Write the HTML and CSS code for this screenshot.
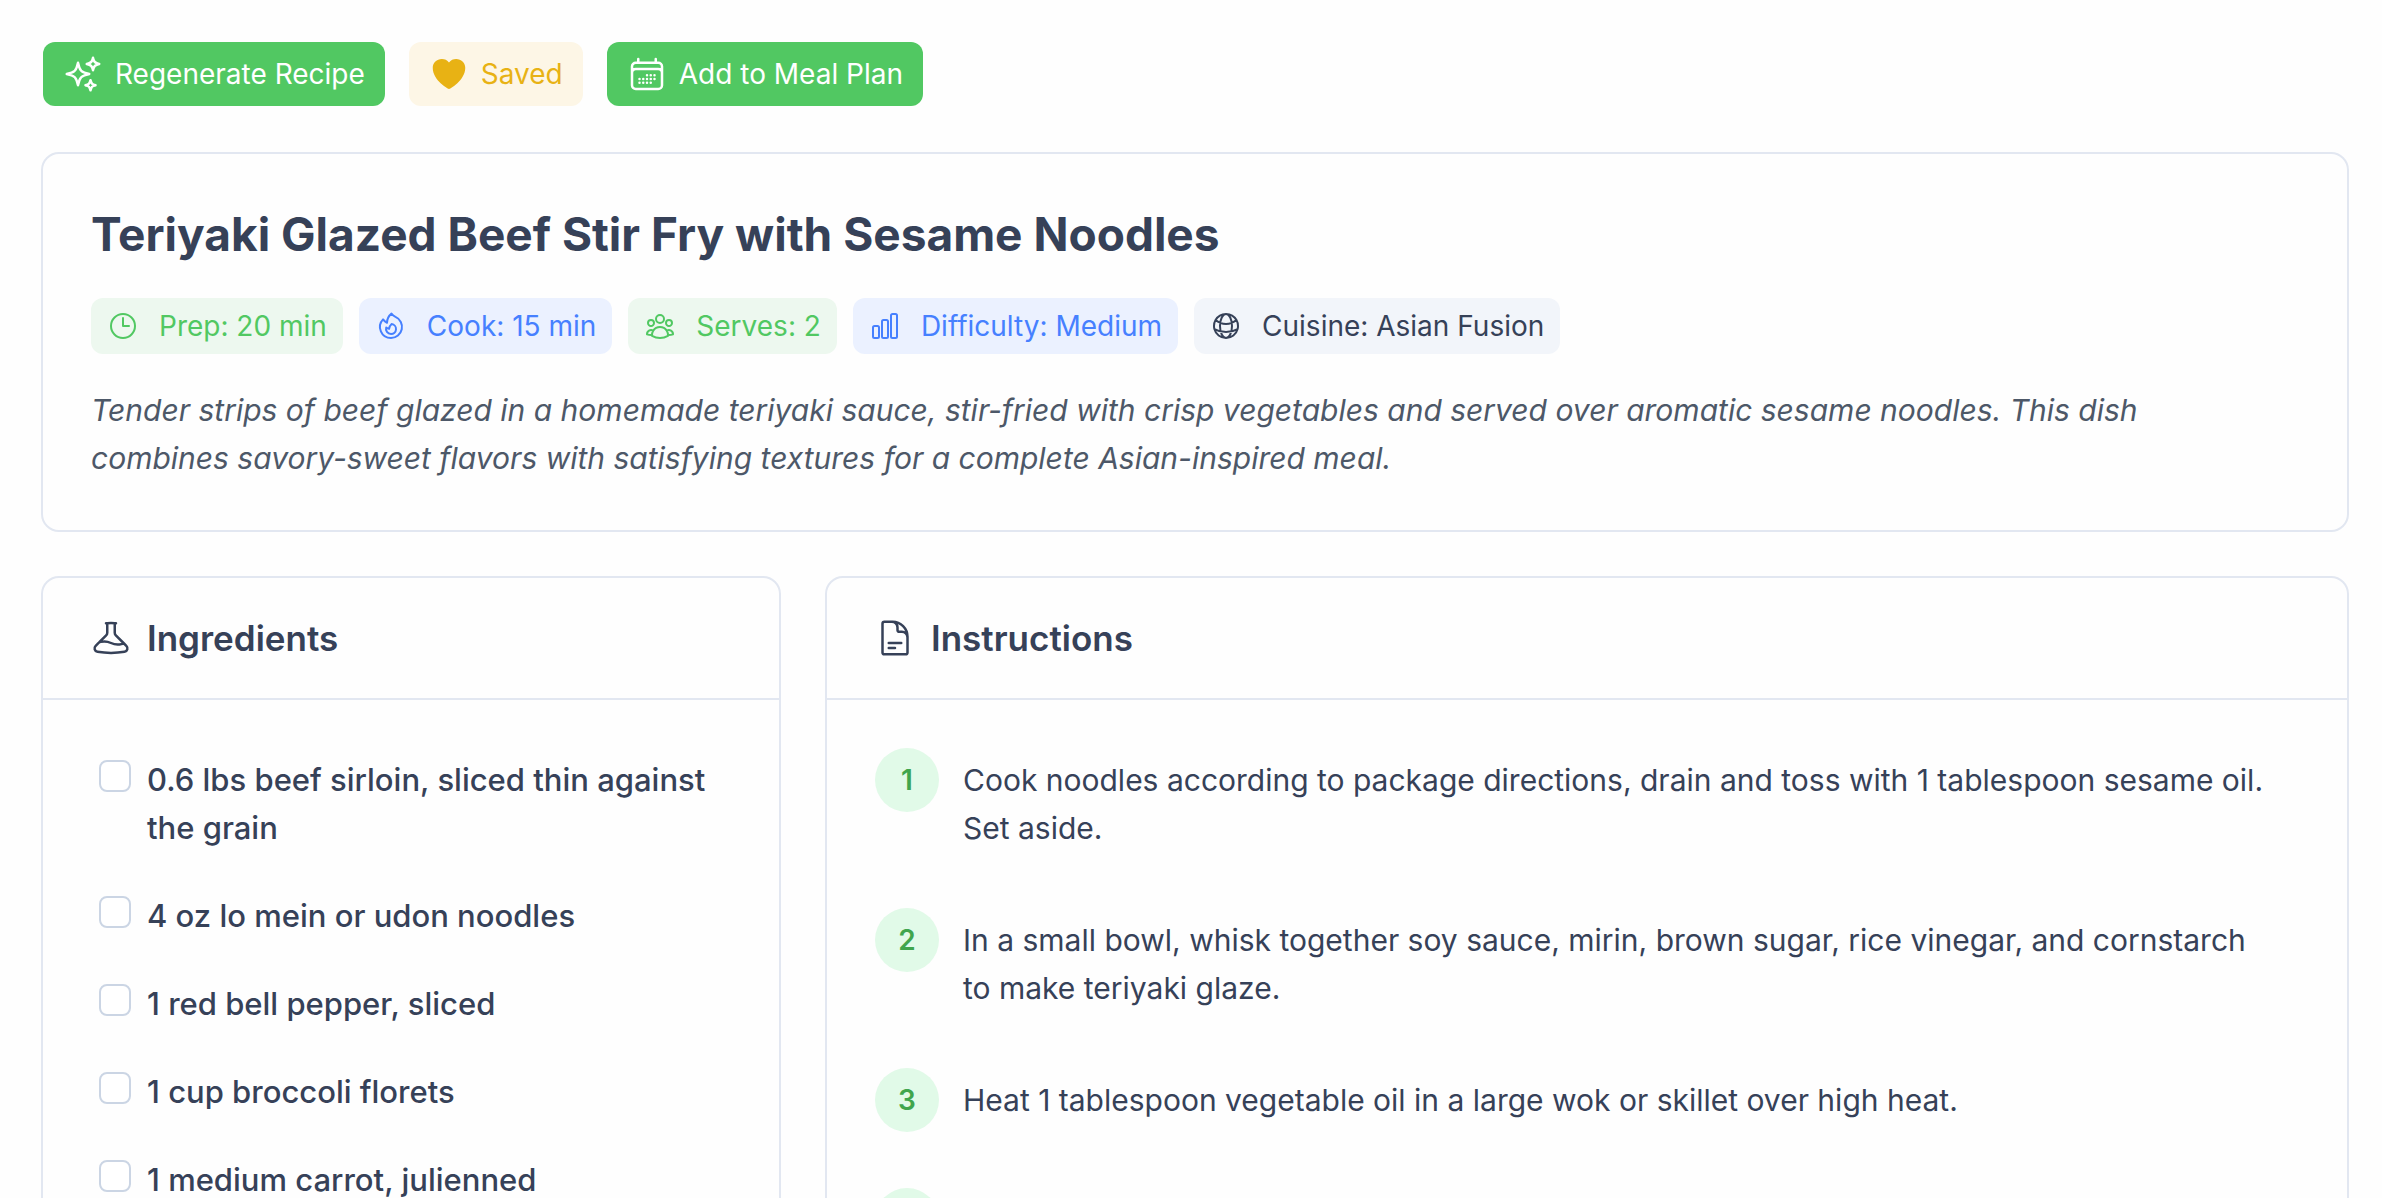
FILE: index.html
```html
<!DOCTYPE html>
<html lang="en">
<head>
<meta charset="utf-8">
<meta name="viewport" content="width=device-width, initial-scale=1">
<title>Teriyaki Glazed Beef Stir Fry with Sesame Noodles</title>
<link rel="stylesheet" href="styles.css">
</head>
<body>
<main class="page">
  <div class="actions">
    <button class="btn btn-primary" type="button">
      <svg class="icon" viewBox="0 0 24 24" aria-hidden="true"><path d="M9.813 15.904 9 18.75l-.813-2.846a4.5 4.5 0 0 0-3.09-3.09L2.25 12l2.846-.813a4.5 4.5 0 0 0 3.09-3.09L9 5.25l.813 2.846a4.5 4.5 0 0 0 3.09 3.09L15.75 12l-2.846.813a4.5 4.5 0 0 0-3.09 3.09ZM18.259 8.715 18 9.75l-.259-1.035a3.375 3.375 0 0 0-2.455-2.456L14.25 6l1.036-.259a3.375 3.375 0 0 0 2.455-2.456L18 2.25l.259 1.035a3.375 3.375 0 0 0 2.456 2.456L21.75 6l-1.035.259a3.375 3.375 0 0 0-2.456 2.456ZM16.894 20.567 16.5 21.75l-.394-1.183a2.25 2.25 0 0 0-1.423-1.423L13.5 18.75l1.183-.394a2.25 2.25 0 0 0 1.423-1.423l.394-1.183.394 1.183a2.25 2.25 0 0 0 1.423 1.423l1.183.394-1.183.394a2.25 2.25 0 0 0-1.423 1.423Z"/></svg>
      Regenerate Recipe
    </button>
    <button class="btn btn-saved" type="button" aria-pressed="true">
      <svg class="icon icon-solid" viewBox="0 0 24 24" aria-hidden="true"><path d="m11.645 20.91-.007-.003-.022-.012a15.247 15.247 0 0 1-.383-.218 25.18 25.18 0 0 1-4.244-3.17C4.688 15.36 2.25 12.174 2.25 8.25 2.25 5.322 4.714 3 7.688 3A5.5 5.5 0 0 1 12 5.052 5.5 5.5 0 0 1 16.313 3c2.973 0 5.437 2.322 5.437 5.25 0 3.925-2.438 7.111-4.739 9.256a25.175 25.175 0 0 1-4.244 3.17 15.247 15.247 0 0 1-.383.219l-.022.012-.007.004-.003.001a.752.752 0 0 1-.704 0l-.003-.001Z"/></svg>
      Saved
    </button>
    <button class="btn btn-primary" type="button">
      <svg class="icon" viewBox="0 0 24 24" aria-hidden="true"><path d="M6.75 3v2.25M17.25 3v2.25M3 18.75V7.5a2.25 2.25 0 0 1 2.25-2.25h13.5A2.25 2.25 0 0 1 21 7.5v11.25m-18 0A2.25 2.25 0 0 0 5.25 21h13.5A2.25 2.25 0 0 0 21 18.75m-18 0v-7.5A2.25 2.25 0 0 1 5.25 9h13.5A2.25 2.25 0 0 1 21 11.25v7.5m-9-6h.008v.008H12v-.008ZM12 15h.008v.008H12V15Zm0 2.25h.008v.008H12v-.008ZM9.75 15h.008v.008H9.75V15Zm0 2.25h.008v.008H9.75v-.008ZM7.5 15h.008v.008H7.5V15Zm0 2.25h.008v.008H7.5v-.008Zm6.75-4.5h.008v.008h-.008v-.008Zm0 2.25h.008v.008h-.008V15Zm0 2.25h.008v.008h-.008v-.008Zm2.25-4.5h.008v.008H16.5v-.008Zm0 2.25h.008v.008H16.5V15Z"/></svg>
      Add to Meal Plan
    </button>
  </div>

  <section class="card summary">
    <h1 class="title">Teriyaki Glazed Beef Stir Fry with Sesame Noodles</h1>
    <ul class="badges">
      <li class="badge badge-green">
        <svg class="icon icon-small" viewBox="0 0 24 24" aria-hidden="true"><path d="M12 6v6h4.5m4.5 0a9 9 0 1 1-18 0 9 9 0 0 1 18 0Z"/></svg>
        Prep: 20 min
      </li>
      <li class="badge badge-blue">
        <svg class="icon icon-small" viewBox="0 0 24 24" aria-hidden="true"><path d="M15.362 5.214A8.252 8.252 0 0 1 12 21 8.25 8.25 0 0 1 6.038 7.047 8.287 8.287 0 0 0 9 9.601a8.983 8.983 0 0 1 3.361-6.867 8.21 8.21 0 0 0 3 2.48Z"/><path d="M12 18a3.75 3.75 0 0 0 .495-7.468 5.99 5.99 0 0 0-1.925 3.547 5.975 5.975 0 0 1-2.133-1.001A3.75 3.75 0 0 0 12 18Z"/></svg>
        Cook: 15 min
      </li>
      <li class="badge badge-green">
        <svg class="icon icon-small" viewBox="0 0 24 24" aria-hidden="true"><path d="M18 18.72a9.094 9.094 0 0 0 3.741-.479 3 3 0 0 0-4.682-2.72m.94 3.198.001.031c0 .225-.012.447-.037.666A11.944 11.944 0 0 1 12 21c-2.17 0-4.207-.576-5.963-1.584A6.062 6.062 0 0 1 6 18.719m12 0a5.971 5.971 0 0 0-.941-3.197m0 0A5.995 5.995 0 0 0 12 12.75a5.995 5.995 0 0 0-5.058 2.772m0 0a3 3 0 0 0-4.681 2.72 8.986 8.986 0 0 0 3.74.477m.94-3.197a5.971 5.971 0 0 0-.94 3.197M15 6.75a3 3 0 1 1-6 0 3 3 0 0 1 6 0Zm6 3a2.25 2.25 0 1 1-4.5 0 2.25 2.25 0 0 1 4.5 0Zm-13.5 0a2.25 2.25 0 1 1-4.5 0 2.25 2.25 0 0 1 4.5 0Z"/></svg>
        Serves: 2
      </li>
      <li class="badge badge-blue">
        <svg class="icon icon-small" viewBox="0 0 24 24" aria-hidden="true"><path d="M3 13.125C3 12.504 3.504 12 4.125 12h2.25c.621 0 1.125.504 1.125 1.125v6.75C7.5 20.496 6.996 21 6.375 21h-2.25A1.125 1.125 0 0 1 3 19.875v-6.75ZM9.75 8.625c0-.621.504-1.125 1.125-1.125h2.25c.621 0 1.125.504 1.125 1.125v11.25c0 .621-.504 1.125-1.125 1.125h-2.25a1.125 1.125 0 0 1-1.125-1.125V8.625ZM16.5 4.125c0-.621.504-1.125 1.125-1.125h2.25C20.496 3 21 3.504 21 4.125v15.75c0 .621-.504 1.125-1.125 1.125h-2.25a1.125 1.125 0 0 1-1.125-1.125V4.125Z"/></svg>
        Difficulty: Medium
      </li>
      <li class="badge badge-slate">
        <svg class="icon icon-small" viewBox="0 0 24 24" aria-hidden="true"><path d="M12 21a9.004 9.004 0 0 0 8.716-6.747M12 21a9.004 9.004 0 0 1-8.716-6.747M12 21c2.485 0 4.5-4.03 4.5-9S14.485 3 12 3m0 18c-2.485 0-4.5-4.03-4.5-9S9.515 3 12 3m0 0a8.997 8.997 0 0 1 7.843 4.582M12 3a8.997 8.997 0 0 0-7.843 4.582m15.686 0A11.953 11.953 0 0 1 12 10.5c-2.998 0-5.74-1.1-7.843-2.918m15.686 0A8.959 8.959 0 0 1 21 12c0 .778-.099 1.533-.284 2.253m0 0A17.919 17.919 0 0 1 12 16.5c-3.162 0-6.133-.815-8.716-2.247m0 0A9.015 9.015 0 0 1 3 12c0-1.605.42-3.113 1.157-4.418"/></svg>
        Cuisine: Asian Fusion
      </li>
    </ul>
    <p class="description">Tender strips of beef glazed in a homemade teriyaki sauce, stir-fried with crisp vegetables and served over aromatic sesame noodles. This dish combines savory-sweet flavors with satisfying textures for a complete Asian-inspired meal.</p>
  </section>

  <div class="columns">
    <section class="card">
      <header class="card-header">
        <svg class="icon" viewBox="0 0 24 24" aria-hidden="true"><path d="M9.75 3.104v5.714a2.25 2.25 0 0 1-.659 1.591L5 14.5M9.75 3.104c-.251.023-.501.05-.75.082m.75-.082a24.301 24.301 0 0 1 4.5 0m0 0v5.714c0 .597.237 1.17.659 1.591L19.8 15.3M14.25 3.104c.251.023.501.05.75.082M19.8 15.3l-1.57.393A9.065 9.065 0 0 1 12 15a9.065 9.065 0 0 0-6.23-.693L5 14.5m14.8.8 1.402 1.402c1.232 1.232.65 3.318-1.067 3.611A48.309 48.309 0 0 1 12 21c-2.773 0-5.491-.235-8.135-.687-1.718-.293-2.3-2.379-1.067-3.61L5 14.5"/></svg>
        <h2 class="card-title">Ingredients</h2>
      </header>
      <ul class="ingredients">
        <li><label class="ingredient"><input class="check" type="checkbox"><span>0.6 lbs beef sirloin, sliced thin against the grain</span></label></li>
        <li><label class="ingredient"><input class="check" type="checkbox"><span>4 oz lo mein or udon noodles</span></label></li>
        <li><label class="ingredient"><input class="check" type="checkbox"><span>1 red bell pepper, sliced</span></label></li>
        <li><label class="ingredient"><input class="check" type="checkbox"><span>1 cup broccoli florets</span></label></li>
        <li><label class="ingredient"><input class="check" type="checkbox"><span>1 medium carrot, julienned</span></label></li>
      </ul>
    </section>

    <section class="card">
      <header class="card-header">
        <svg class="icon" viewBox="0 0 24 24" aria-hidden="true"><path d="M19.5 14.25v-2.625a3.375 3.375 0 0 0-3.375-3.375h-1.5A1.125 1.125 0 0 1 13.5 7.125v-1.5a3.375 3.375 0 0 0-3.375-3.375H8.25m0 12.75h7.5m-7.5 3H12M10.5 2.25H5.625c-.621 0-1.125.504-1.125 1.125v17.25c0 .621.504 1.125 1.125 1.125h12.75c.621 0 1.125-.504 1.125-1.125V11.25a9 9 0 0 0-9-9Z"/></svg>
        <h2 class="card-title">Instructions</h2>
      </header>
      <ol class="steps">
        <li class="step"><span class="step-number">1</span><p class="step-text">Cook noodles according to package directions, drain and toss with 1 tablespoon sesame oil. Set aside.</p></li>
        <li class="step"><span class="step-number">2</span><p class="step-text">In a small bowl, whisk together soy sauce, mirin, brown sugar, rice vinegar, and cornstarch to make teriyaki glaze.</p></li>
        <li class="step"><span class="step-number">3</span><p class="step-text">Heat 1 tablespoon vegetable oil in a large wok or skillet over high heat.</p></li>
        <li class="step"><span class="step-number">4</span></li>
      </ol>
    </section>
  </div>
</main>
</body>
</html>
```
FILE: styles.css
```css
:root {
  --green: #51c862;
  --green-dark: #40a54d;
  --blue: #4680ff;
  --slate: #364158;
  --line: #e2e7f1;
}

* {
  box-sizing: border-box;
}

body {
  margin: 0;
  background: #fefefe;
  color: var(--slate);
  font-family: Inter, "Liberation Sans", sans-serif;
  font-size: 30px;
  line-height: 48px;
}

h1, h2, p, ul, ol {
  margin: 0;
  padding: 0;
}

ul, ol {
  list-style: none;
}

.page {
  padding: 42px 33px 44px 41px;
}

.icon {
  flex: none;
  width: 40px;
  height: 40px;
  fill: none;
  stroke: currentColor;
  stroke-width: 1.5;
  stroke-linecap: round;
  stroke-linejoin: round;
}

.icon-small {
  width: 32px;
  height: 32px;
}

.icon-solid {
  fill: currentColor;
  stroke: none;
}

.actions {
  display: flex;
  flex-wrap: wrap;
  gap: 24px;
  padding-left: 2px;
  margin-bottom: 46px;
}

.btn {
  display: flex;
  align-items: center;
  gap: 12px;
  padding: 12px 20px;
  border: 0;
  border-radius: 12px;
  font: inherit;
  font-size: 28px;
  line-height: 40px;
  cursor: pointer;
}

.btn-primary {
  background: var(--green);
  color: #fff;
}

.btn-saved {
  background: #fdf6e6;
  color: #e8b214;
}

.card {
  border: 2px solid var(--line);
  border-radius: 18px;
  background: #fefefe;
}

.summary {
  display: flex;
  flex-direction: column;
  gap: 32px;
  padding: 48px;
  margin-bottom: 44px;
}

.title {
  font-size: 46px;
  font-weight: 700;
  line-height: 64px;
}

.badges {
  display: flex;
  flex-wrap: wrap;
  gap: 16px;
}

.badge {
  display: flex;
  align-items: center;
  gap: 20px;
  padding: 8px 16px;
  border-radius: 12px;
  font-size: 28px;
  line-height: 40px;
}

.badge-green {
  background: #edf8ef;
  color: var(--green);
}

.badge-blue {
  background: #ebf1ff;
  color: var(--blue);
}

.badge-slate {
  background: #f2f5fa;
}

.description {
  padding-right: 48px;
  color: #4d5868;
  font-style: italic;
}

.columns {
  display: grid;
  grid-template-columns: minmax(0, 740fr) minmax(0, 1524fr);
  gap: 44px;
}

.card-header {
  display: flex;
  align-items: center;
  gap: 16px;
  padding: 36px 48px;
  border-bottom: 2px solid var(--line);
}

.card-title {
  font-size: 35px;
  font-weight: 600;
  line-height: 48px;
}

.ingredients {
  display: flex;
  flex-direction: column;
  gap: 24px;
  padding: 48px;
}

.ingredient {
  display: flex;
  align-items: flex-start;
  gap: 16px;
  padding: 8px;
  font-size: 31px;
  font-weight: 500;
  cursor: pointer;
}

.check {
  appearance: none;
  flex: none;
  width: 32px;
  height: 32px;
  margin: 4px 0 0;
  border: 2px solid #cbd5e4;
  border-radius: 8px;
  background: #fff;
}

.check:checked {
  border-color: var(--green);
  background: var(--green);
}

.steps {
  display: flex;
  flex-direction: column;
  gap: 56px;
  padding: 48px;
}

.step {
  display: flex;
  align-items: flex-start;
  gap: 24px;
}

.step-number {
  display: flex;
  flex: none;
  align-items: center;
  justify-content: center;
  width: 64px;
  height: 64px;
  border-radius: 50%;
  background: #e1fae8;
  color: var(--green-dark);
  font-size: 28px;
  font-weight: 600;
  line-height: 40px;
}

.step-text {
  padding: 8px 24px 0 0;
}
```
